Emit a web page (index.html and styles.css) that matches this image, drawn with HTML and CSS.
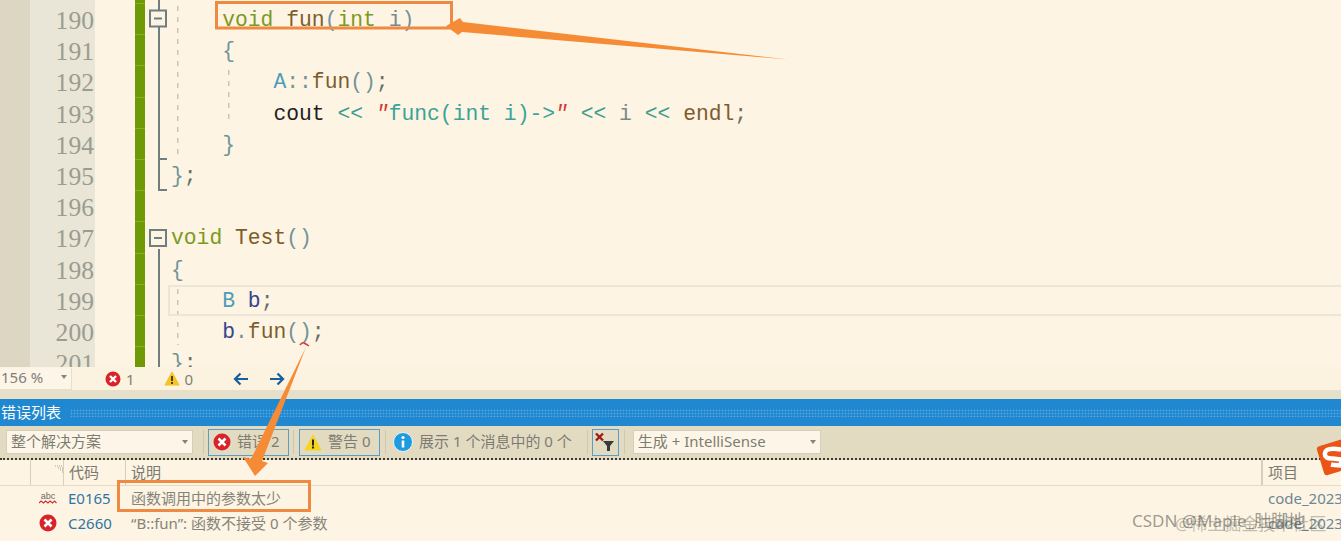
FILE: index.html
```html
<!DOCTYPE html>
<html lang="zh">
<head>
<meta charset="utf-8">
<title>错误列表</title>
<link rel="stylesheet" href="styles.css">
</head>
<body>
<div class="page">
  <section class="editor">
    <div class="margin"></div>
    <div class="numbers">
      <div>190</div><div>191</div><div>192</div><div>193</div><div>194</div><div>195</div><div>196</div><div>197</div><div>198</div><div>199</div><div>200</div><div>201</div>
    </div>
    <div class="changebar"></div>
    <svg class="fold" width="24" height="367" viewBox="148 0 24 367">
      <path d="M159 0V10M159 27V190H167M159 159H167M159 249V367" fill="none" stroke="#6f7f80" stroke-width="2"/>
      <rect x="150" y="10.500" width="16" height="16" fill="none" stroke="#6f7f80" stroke-width="2"/>
      <path d="M154 18.500H162" stroke="#6f7f80" stroke-width="2"/>
      <rect x="150" y="230" width="16" height="16" fill="none" stroke="#6f7f80" stroke-width="2"/>
      <path d="M154 238H162" stroke="#6f7f80" stroke-width="2"/>
    </svg>
    <div class="code">
      <span class="ln">    <span class="kw">void</span> <span class="fn">fun</span><span class="pn">(</span><span class="kw">int</span> <span class="ar">i</span><span class="pn">)</span></span>
      <span class="ln">    <span class="pn">{</span></span>
      <span class="ln">        <span class="ty">A</span><span class="pn">::</span><span class="fn">fun</span><span class="pn">()</span><span class="sm">;</span></span>
      <span class="ln">        <span class="blk">cout</span> <span class="op">&lt;&lt;</span> <span class="qt">"</span><span class="st">func(int i)-&gt;</span><span class="qt">"</span> <span class="op">&lt;&lt;</span> <span class="ar">i</span> <span class="op">&lt;&lt;</span> <span class="fn">endl</span><span class="sm">;</span></span>
      <span class="ln">    <span class="pn">}</span></span>
      <span class="ln"><span class="pn">}</span><span class="sm">;</span></span>
      <span class="ln"> </span>
      <span class="ln"><span class="kw">void</span> <span class="fn">Test</span><span class="pn">()</span></span>
      <span class="ln"><span class="pn">{</span></span>
      <span class="ln">    <span class="ty">B</span> <span class="var">b</span><span class="sm">;</span></span>
      <span class="ln">    <span class="var">b</span><span class="pn">.</span><span class="fn">fun</span><span class="pn">()</span><span class="sm">;</span></span>
      <span class="ln"><span class="pn">}</span><span class="sm">;</span></span>
    </div>
    <div class="current-line"></div>
  </section>

  <div class="statusbar">
    <div class="zoom"><span>156 %</span><i class="caret"></i></div>
    <span class="stat stat-err">
      <svg width="16" height="16" viewBox="0 0 16 16"><circle cx="8" cy="8" r="7.500" fill="#d8232a"/><path d="M5 5l6 6M11 5l-6 6" stroke="#fff" stroke-width="2.400"/></svg>1
    </span>
    <span class="stat stat-warn">
      <svg width="16" height="15" viewBox="0 0 16 15"><path d="M8 1L15 14H1Z" fill="#f5c421" stroke="#f5c421" stroke-linejoin="round"/><path d="M8 5v5M8 11v2" stroke="#222" stroke-width="1.600"/></svg>0
    </span>
    <svg class="nav nav-back" width="16" height="14" viewBox="0 0 16 14"><path d="M15 7H2M7.500 1.500L2 7l5.500 5.500" fill="none" stroke="#14609f" stroke-width="2.200"/></svg>
    <svg class="nav" width="16" height="14" viewBox="0 0 16 14"><path d="M1 7h13M8.500 1.500L14 7l-5.500 5.500" fill="none" stroke="#14609f" stroke-width="2.200"/></svg>
  </div>
  <div class="splitter"></div>

  <header class="titlebar">
    <span class="title">错误列表</span>
    <div class="grip"></div>
  </header>

  <div class="toolbar">
    <div class="combo combo-scope"><span>整个解决方案</span><i class="caret"></i></div>
    <i class="sep"></i>
    <div class="toggle toggle-err">
      <svg width="18" height="18" viewBox="0 0 18 18"><circle cx="9" cy="9" r="8.500" fill="#d8232a"/><path d="M5.500 5.500l7 7M12.500 5.500l-7 7" stroke="#fff" stroke-width="2.600"/></svg>
      <span>错误 2</span>
    </div>
    <i class="sep"></i>
    <div class="toggle toggle-warn">
      <svg width="18" height="17" viewBox="0 0 18 17"><path d="M9 1L17 16H1Z" fill="#f7d51d" stroke="#f7d51d" stroke-linejoin="round"/><path d="M9 5.500v6M9 12.500v2" stroke="#222" stroke-width="2"/></svg>
      <span>警告 0</span>
    </div>
    <i class="sep"></i>
    <div class="info">
      <svg width="20" height="20" viewBox="0 0 20 20"><circle cx="10" cy="10" r="9.500" fill="#1f9be0" stroke="#e9f3f5"/><path d="M10 8.500v7" stroke="#fff" stroke-width="2.600"/><circle cx="10" cy="5.500" r="1.600" fill="#fff"/></svg>
      <span>展示 1 个消息中的 0 个</span>
    </div>
    <i class="sep sep-filter"></i>
    <div class="toggle toggle-filter">
      <svg width="21" height="20" viewBox="0 0 21 20"><path d="M1 1.500l7 7M8 1.500l-7 7" stroke="#a11c10" stroke-width="2.400"/><path d="M8 9h11l-4 5v5h-3v-5Z" fill="#3a3a38"/></svg>
    </div>
    <i class="sep"></i>
    <div class="combo combo-source"><span>生成 + IntelliSense</span><i class="caret"></i></div>
  </div>

  <section class="list">
    <div class="row-head">
      <div class="cell cell-a"></div>
      <div class="cell cell-b"><svg width="10" height="8" viewBox="0 0 10 8"><path d="M1 1h7M4 3h5M6 5h3M8 7h1" stroke="#a8a498" stroke-dasharray="1 1"/></svg></div>
      <div class="cell cell-code">代码</div>
      <div class="cell cell-desc">说明</div>
      <div class="cell cell-proj">项目</div>
    </div>
    <div class="row">
      <div class="ico ico-abc"><span>abc</span><svg width="18" height="4" viewBox="0 0 18 4"><path d="M0 3l2-2 2.500 2 2-2 2.500 2 2-2 2.500 2 2-2 2 2" fill="none" stroke="#cf2d2d" stroke-width="1.100"/></svg></div>
      <a class="err-code">E0165</a>
      <div class="err-text">函数调用中的参数太少</div>
      <div class="err-proj">code_2023</div>
    </div>
    <div class="row">
      <div class="ico"><svg width="18" height="18" viewBox="0 0 18 18"><circle cx="9" cy="9" r="8.500" fill="#d8232a"/><path d="M5.500 5.500l7 7M12.500 5.500l-7 7" stroke="#fff" stroke-width="2.600"/></svg></div>
      <a class="err-code">C2660</a>
      <div class="err-text">“B::fun”: 函数不接受 0 个参数</div>
      <div class="err-proj">code_2023</div>
    </div>
  </section>

  <svg class="overlay" width="1341" height="541" viewBox="0 0 1341 541">
    <path d="M300 345q2-3 4-2t5 3" fill="none" stroke="#d33a32" stroke-width="1.500"/>
    <rect x="216.500" y="2.500" width="235" height="25.500" fill="none" stroke="#ee8a42" stroke-width="3"/>
    <rect x="118.500" y="481.500" width="191" height="29" fill="none" stroke="#ee8a42" stroke-width="3"/>
    <path d="M446 26L460 18L463 22L788 59.500L462 32L458 35Z" fill="#f68b35"/>
    <path d="M306 347L262 461L268 463L255 476L243 457L251 459Z" fill="#f68b35"/>
    <g transform="rotate(-17 1332 458)">
      <rect x="1320" y="443" width="30" height="30" rx="3" fill="#ea5414"/>
    </g>
    <path d="M1341 449.500q-15-2.500-16 3.500t8 5.500q8 1 8 1v6q-8-.500-10-1" fill="none" stroke="#fff" stroke-width="4.500"/>
  </svg>

  <div class="mark mark-a">CSDN @Maple_肚脚地</div>
  <div class="mark mark-b">@稀土掘金技术社区</div>
</div>
</body>
</html>
```

FILE: styles.css
```css
* { box-sizing: border-box; }
html, body { margin: 0; padding: 0; }
body { width: 1341px; height: 541px; overflow: hidden; background: #fdf4e3; }

.page {
  position: relative;
  width: 1341px;
  height: 541px;
  display: flex;
  flex-direction: column;
  font-family: "Noto Sans", "Noto Sans CJK SC", sans-serif;
  color: #7b7a70;
}

/* Editor */
.editor {
  position: relative;
  height: 367px;
  flex: none;
  display: flex;
  overflow: hidden;
  background: #fdf4e3;
}
.margin { width: 30px; flex: none; background: #dcd6c3; }
.numbers {
  width: 65px;
  flex: none;
  padding: 5px 1px 0 0;
  background: #e9e6d8;
  font: 25.6px/31.2px "Liberation Serif", serif;
  color: #9b9c8f;
  text-align: right;
}
.changebar {
  width: 10px;
  flex: none;
  margin: 0 3px 0 40px;
  background: repeating-linear-gradient(180deg, #8aae2c 0, #8aae2c 1px, #6f9a06 1px, #6f9a06 31.2px);
  background-position: 0 3px;
}
.fold { flex: none; display: block; }
.code {
  margin-left: -1px;
  padding-top: 5px;
  font: 21.33px/31.2px "Liberation Mono", monospace;
  flex: 1;
  background:
    repeating-linear-gradient(180deg, #c9c5bb 0 5px, transparent 5px 11px) 6px 6px / 1.500px 150px no-repeat,
    repeating-linear-gradient(180deg, #c9c5bb 0 5px, transparent 5px 11px) 6px 289px / 1.500px 56px no-repeat,
    repeating-linear-gradient(180deg, #c9c5bb 0 5px, transparent 5px 11px) 57px 70px / 1.500px 54px no-repeat;
}
.ln { display: block; height: 31.2px; white-space: pre; }
.kw { color: #7c9a1e; }
.fn { color: #7d5c2c; }
.pn { color: #6f9499; }
.ar { color: #7a8a8c; }
.ty { color: #4d9cb8; }
.sm { color: #6a6f66; }
.blk { color: #1e1e1c; }
.op { color: #3aa08e; }
.st { color: #3aa399; }
.qt { color: #d23a32; font-style: italic; }
.var { color: #37458c; }
.current-line {
  position: absolute;
  left: 168px;
  right: 0;
  top: 285px;
  height: 31px;
  border: 2px solid #ece6d8;
  border-right: 0;
}

/* Status strip */
.statusbar {
  height: 23px;
  flex: none;
  display: flex;
  align-items: center;
  background: #fbf2df;
  font-size: 15px;
  line-height: 20px;
  color: #808076;
}
.zoom {
  width: 72px;
  height: 22px;
  display: flex;
  align-items: center;
  justify-content: space-between;
  padding: 0 4px 2px 1px;
  background: #fdf6e8;
  border-right: 1px solid #e6dfca;
  border-bottom: 1px solid #e6dfca;
}
.caret {
  width: 0;
  height: 0;
  border: 3.500px solid transparent;
  border-top: 4px solid #85847a;
  border-bottom: 0;
  flex: none;
}
.stat { display: flex; align-items: center; gap: 5px; }
.stat-err { margin-left: 33px; }
.stat-warn { margin-left: 29px; }
.nav { margin-left: 20px; }
.nav-back { margin-left: 40px; }
.splitter { height: 9px; flex: none; background: #e6dfca; }

/* Title bar */
.titlebar {
  height: 27px;
  flex: none;
  display: flex;
  align-items: center;
  background: #2088d0;
  color: #fff;
  font-size: 15px;
  line-height: 20px;
  padding-left: 1px;
}
.title { width: 69px; flex: none; padding-bottom: 2px; }
.grip {
  flex: 1;
  height: 8px;
  background: radial-gradient(circle, #58a6de 0.8px, transparent 1.1px) 0 0 / 3px 3px;
}

/* Toolbar */
.toolbar {
  height: 34px;
  flex: none;
  display: flex;
  align-items: center;
  padding-left: 6px;
  background: #e2dbc2;
  border-bottom: 2px dotted #3c3a30;
  font-size: 15px;
  line-height: 20px;
  color: #7d7c72;
}
.toolbar span { padding-bottom: 2px; }
.combo {
  height: 24px;
  display: flex;
  align-items: center;
  justify-content: space-between;
  padding: 0 4px 0 4px;
  background: #fdf6e8;
  border: 1px solid #d6cfb7;
  flex: none;
}
.combo-scope { width: 187px; }
.combo-source { width: 188px; margin-left: 3px; }
.sep { width: 1px; height: 24px; background: #cfc8ae; margin: 0 5px 0 5px; flex: none; }
.toolbar .combo-scope + .sep { margin-left: 10px; margin-right: 4px; }
.toggle-err + .sep { margin-left: 4px; margin-right: 5px; }
.toggle-warn + .sep { margin-right: 7px; }
.sep-filter { margin-left: 15px; margin-right: 4px; }
.toggle {
  height: 27px;
  display: flex;
  align-items: center;
  gap: 6px;
  padding-left: 4px;
  border: 1px solid #5b9dc4;
  flex: none;
}
.toggle-err { width: 81px; }
.toggle-warn { width: 81px; }
.toggle-filter { width: 27px; padding-left: 2px; }
.info { display: flex; align-items: center; gap: 6px; flex: none; }

/* Error list */
.list { flex: 1; font-size: 15px; line-height: 20px; color: #7b7a70; }
.row-head {
  height: 26px;
  display: flex;
  border-bottom: 1px solid #e4dcc6;
}
.cell { border-right: 1px solid #d6cfb9; padding-left: 5px; line-height: 24px; flex: none; }
.cell-a { width: 31px; }
.cell-b { width: 33px; padding: 5px 0 0 23px; line-height: 0; }
.cell-code { width: 62px; }
.cell-desc { width: 1137px; border-right: 2px solid #d6cfb9; }
.cell-proj { border: 0; }
.row {
  height: 25px;
  padding-bottom: 2px;
  display: flex;
  align-items: center;
  color: #85847a;
}
.ico { width: 68px; flex: none; display: flex; flex-direction: column; align-items: flex-end; padding-right: 11px; }
.ico-abc { font: 9px/8px "Liberation Sans", sans-serif; color: #6b6a62; align-items: center; padding-left: 39px; }
.err-code { width: 63px; flex: none; color: #2e74a8; font-size: 15px; }
.err-text { width: 1137px; flex: none; }
.err-proj { color: #6d8794; white-space: nowrap; }

/* Overlays */
.overlay { position: absolute; left: 0; top: 0; pointer-events: none; }
.mark {
  position: absolute;
  white-space: nowrap;
  font-size: 17px;
  line-height: 20px;
  color: rgba(96, 96, 90, 0.62);
}
.mark-a { left: 1132px; top: 511px; }
.mark-b { left: 1175px; top: 514px; color: rgba(96, 96, 90, 0.4); }
```
